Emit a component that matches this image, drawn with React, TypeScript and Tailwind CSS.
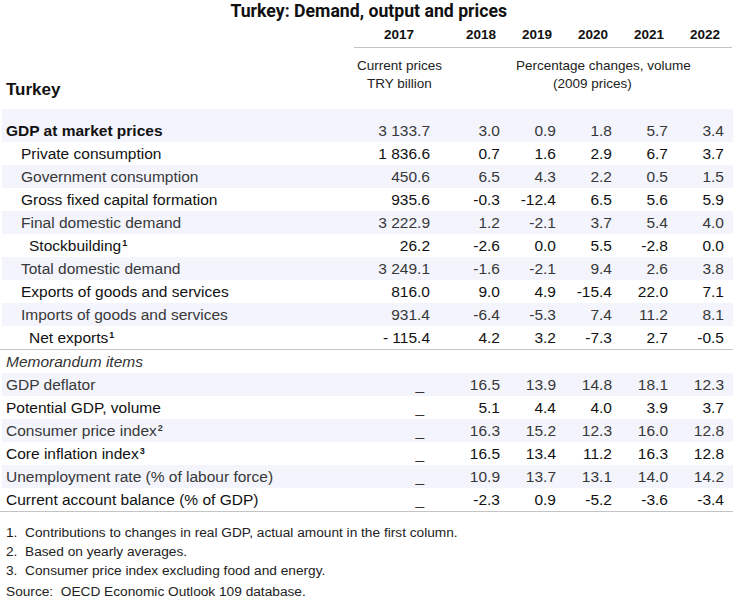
import React from "react";

type Row = {
  label: string;
  sup?: string;
  bold?: boolean;
  indent?: number;
  v: string[];
};

const main: Row[] = [
  { label: "GDP at market prices", bold: true, indent: 0, v: ["3 133.7", "3.0", "0.9", "1.8", "5.7", "3.4"] },
  { label: "Private consumption", indent: 1, v: ["1 836.6", "0.7", "1.6", "2.9", "6.7", "3.7"] },
  { label: "Government consumption", indent: 1, v: ["450.6", "6.5", "4.3", "2.2", "0.5", "1.5"] },
  { label: "Gross fixed capital formation", indent: 1, v: ["935.6", "-0.3", "-12.4", "6.5", "5.6", "5.9"] },
  { label: "Final domestic demand", indent: 1, v: ["3 222.9", "1.2", "-2.1", "3.7", "5.4", "4.0"] },
  { label: "Stockbuilding", sup: "1", indent: 2, v: ["26.2", "-2.6", "0.0", "5.5", "-2.8", "0.0"] },
  { label: "Total domestic demand", indent: 1, v: ["3 249.1", "-1.6", "-2.1", "9.4", "2.6", "3.8"] },
  { label: "Exports of goods and services", indent: 1, v: ["816.0", "9.0", "4.9", "-15.4", "22.0", "7.1"] },
  { label: "Imports of goods and services", indent: 1, v: ["931.4", "-6.4", "-5.3", "7.4", "11.2", "8.1"] },
  { label: "Net exports", sup: "1", indent: 2, v: ["- 115.4", "4.2", "3.2", "-7.3", "2.7", "-0.5"] },
];

const memo: Row[] = [
  { label: "GDP deflator", v: ["_", "16.5", "13.9", "14.8", "18.1", "12.3"] },
  { label: "Potential GDP, volume", v: ["_", "5.1", "4.4", "4.0", "3.9", "3.7"] },
  { label: "Consumer price index", sup: "2", v: ["_", "16.3", "15.2", "12.3", "16.0", "12.8"] },
  { label: "Core inflation index", sup: "3", v: ["_", "16.5", "13.4", "11.2", "16.3", "12.8"] },
  { label: "Unemployment rate (% of labour force)", v: ["_", "10.9", "13.7", "13.1", "14.0", "14.2"] },
  { label: "Current account balance (% of GDP)", v: ["_", "-2.3", "0.9", "-5.2", "-3.6", "-3.4"] },
];

const years = ["2018", "2019", "2020", "2021", "2022"];

function DataRow({ r, tint, first }: { r: Row; tint: boolean; first?: boolean }) {
  const pad = r.indent === 1 ? "pl-[19px]" : r.indent === 2 ? "pl-[27px]" : "pl-[4px]";
  return (
    <div
      className={`flex w-[731px] items-center text-[15.5px] ${first ? "h-[33px] pt-[10px]" : "h-[23px]"} ${
        tint ? "bg-[#f3f4fc] text-[#383838]" : "text-[#111]"
      }`}
    >
      <div className={`w-[353px] whitespace-nowrap ${pad} ${r.bold ? "font-bold text-[#111]" : ""}`}>
        {r.label}
        {r.sup && <sup className="ml-[1px] text-[9px] font-bold">{r.sup}</sup>}
      </div>
      <div className={`w-[89px] text-right ${r.v[0] === "_" ? "pr-[20px] text-[#333]" : "pr-[14px]"}`}>{r.v[0]}</div>
      {r.v.slice(1).map((x, i) => (
        <div key={i} className="w-[56px] text-right">
          {x}
        </div>
      ))}
    </div>
  );
}

export default function App() {
  return (
    <div className="h-[601px] w-[738px] overflow-hidden bg-white font-['Liberation_Sans',Arial,sans-serif] text-[#111]">
      <div className="flex h-[21px] items-center justify-center pt-[1px]">
        <span className="inline-block scale-x-[0.93] font-['Roboto',sans-serif] text-[19px] font-bold leading-[20px] text-[#111]">
          Turkey: Demand, output and prices
        </span>
      </div>

      <div className="ml-[354px] flex h-[27px] w-[378px] items-center border-b border-[#c4c4c4] pt-[2px] text-[13.5px] font-bold">
        <div className="w-[90px] text-center">2017</div>
        {years.map((y) => (
          <div key={y} className="w-[56px] pr-[4px] text-right">
            {y}
          </div>
        ))}
      </div>

      <div className="ml-[2px] flex h-[61px] w-[731px] text-[13.5px] leading-[18px] text-[#222]">
        <div className="w-[353px] pl-[4px] pt-[32px] text-[17px] font-bold leading-[20px] text-[#111]">Turkey</div>
        <div className="w-[89px] pt-[9px] text-center">
          <div>Current prices</div>
          <div>TRY billion</div>
        </div>
        <div className="w-[280px] pt-[9px]">
          <div className="ml-[72px] whitespace-nowrap">Percentage changes, volume</div>
          <div className="ml-[109px] whitespace-nowrap">(2009 prices)</div>
        </div>
      </div>

      <div className="ml-[2px]">
        {main.map((r, i) => (
          <DataRow key={r.label} r={r} tint={i % 2 === 0} first={i === 0} />
        ))}
      </div>
      <div className="h-px w-[733px] bg-[#c4c4c4]" />

      <div className="ml-[2px]">
        <div className="flex h-[23px] w-[731px] items-center pl-[4px] text-[15.5px] italic text-[#333]">
          Memorandum items
        </div>
        {memo.map((r, i) => (
          <DataRow key={r.label} r={r} tint={i % 2 === 0} />
        ))}
      </div>
      <div className="h-px w-[733px] bg-[#c4c4c4]" />

      <div className="pl-[6px] pt-[11px] text-[13.7px] leading-[19px] text-[#222]">
        <div>1.&nbsp; Contributions to changes in real GDP, actual amount in the first column.</div>
        <div>2.&nbsp; Based on yearly averages.</div>
        <div>3.&nbsp; Consumer price index excluding food and energy.</div>
        <div className="mt-[2px]">Source:&nbsp; OECD Economic Outlook 109 database.</div>
      </div>
    </div>
  );
}
